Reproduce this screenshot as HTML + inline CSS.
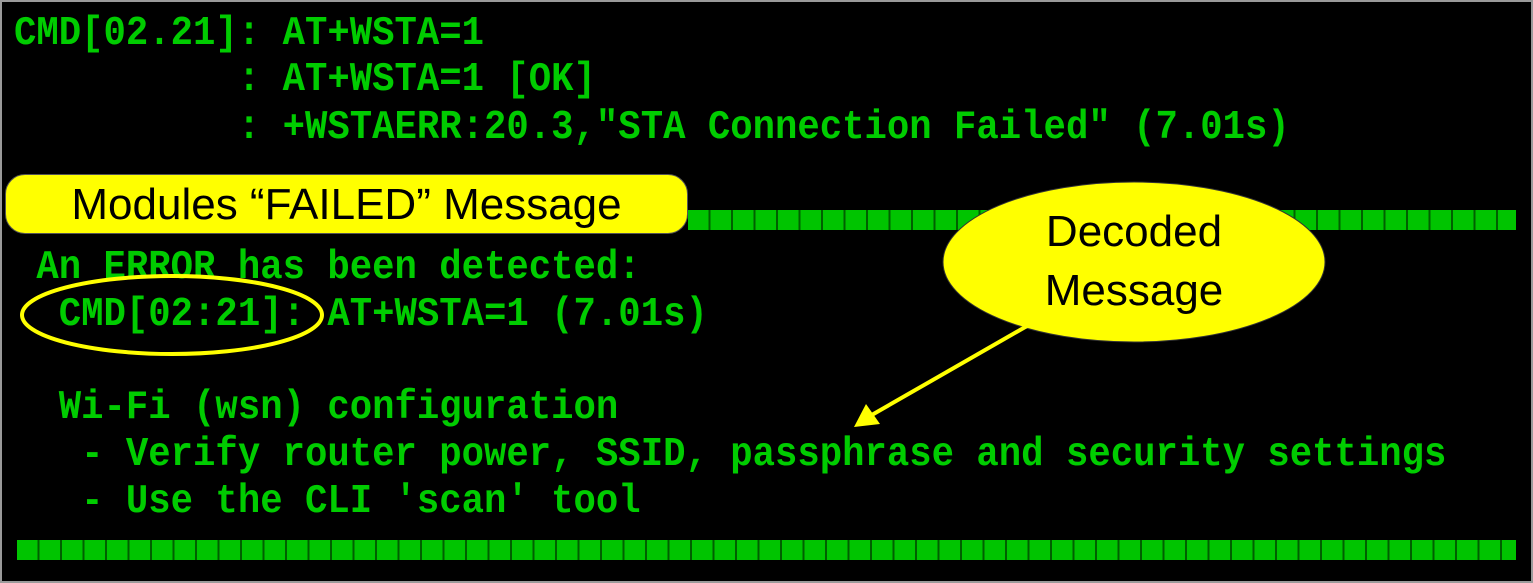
<!DOCTYPE html>
<html><head><style>
html,body{margin:0;padding:0;background:#fff;}
#s{position:relative;width:1533px;height:583px;overflow:hidden;background:#000;box-sizing:border-box;border:2px solid #9a9a9a;}
.t{position:absolute;font-family:"Liberation Mono",monospace;font-weight:bold;font-size:37.3px;color:#00cc00;white-space:pre;line-height:1;transform:scaleY(1.1);transform-origin:left bottom;}
.bar{position:absolute;height:20px;background:repeating-linear-gradient(90deg,#00c400 0,#00c400 20.5px,#006000 20.5px,#006000 22.5px);}
</style></head><body><div id="s">
<div class="t" style="left:12px;top:16px">CMD[02.21]: AT+WSTA=1</div>
<div class="t" style="left:12px;top:62px">          : AT+WSTA=1 [OK]</div>
<div class="t" style="left:12px;top:110px">          : +WSTAERR:20.3,"STA Connection Failed" (7.01s)</div>
<div class="bar" style="left:686px;top:208px;width:828px"></div>
<div class="t" style="left:12px;top:250px"> An ERROR has been detected:</div>
<div class="t" style="left:12px;top:297px">  CMD[02:21]: AT+WSTA=1 (7.01s)</div>
<div class="t" style="left:12px;top:390px">  Wi-Fi (wsn) configuration</div>
<div class="t" style="left:12px;top:437px">   - Verify router power, SSID, passphrase and security settings</div>
<div class="t" style="left:12px;top:484px">   - Use the CLI 'scan' tool</div>
<div class="bar" style="left:15px;top:538px;width:1499px"></div>
<div style="position:absolute;left:3px;top:172px;width:683px;height:60px;background:#ffff00;border:1px solid #555;border-radius:20px;box-sizing:border-box;font-family:'Liberation Sans',sans-serif;font-size:44px;line-height:60px;text-align:center;color:#000;">Modules “FAILED” Message</div>
<svg style="position:absolute;left:0;top:0" width="1533" height="583">
<ellipse cx="170" cy="313" rx="150" ry="39" fill="none" stroke="#ffff00" stroke-width="4"/>
<ellipse cx="1132" cy="260" rx="191" ry="80" fill="#ffff00" stroke="#333" stroke-width="1"/>
<line x1="1025" y1="324" x2="868" y2="414" stroke="#ffff00" stroke-width="4"/>
<polygon points="852,425 864,402 878,422" fill="#ffff00"/>
<text x="1132" y="244" font-family="Liberation Sans,sans-serif" font-size="44" text-anchor="middle" fill="#000">Decoded</text>
<text x="1132" y="303" font-family="Liberation Sans,sans-serif" font-size="44" text-anchor="middle" fill="#000">Message</text>
</svg>
</div></body></html>
